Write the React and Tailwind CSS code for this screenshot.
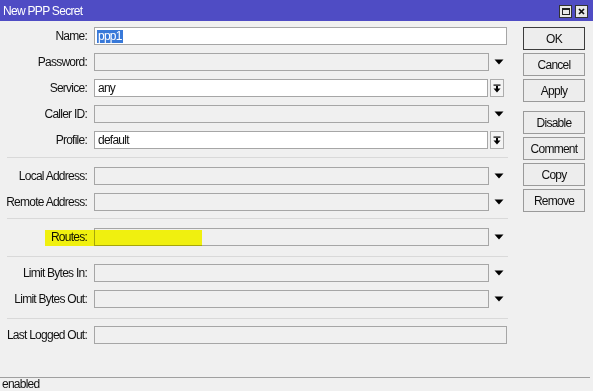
import React from 'react';

const font = { fontFamily: '"Liberation Sans", Arial, sans-serif' };

function Arrow() {
  return (
    <div className="w-[18px] h-[18px] flex items-center justify-center pl-[1px]">
      <svg width="10" height="6" viewBox="0 0 10 6">
        <polygon points="0.5,0.5 9.5,0.5 5,5.5" fill="#000" />
      </svg>
    </div>
  );
}

function ScrollBox() {
  return (
    <div className="ml-[2px] w-[14px] h-[18px] border border-[#adadad] bg-[#f4f4f4] flex items-center justify-center">
      <svg width="8" height="9" viewBox="0 0 8 9">
        <rect x="0.5" y="0.5" width="7" height="1.2" fill="#000" />
        <rect x="3" y="2" width="2" height="3" fill="#000" />
        <polygon points="0.5,4.5 7.5,4.5 4,8.5" fill="#000" />
      </svg>
    </div>
  );
}

function Row({ label, value, kind = 'arrow', white = false, selected = false, highlight = false }) {
  const inputWidth =
    kind === 'full' ? 'w-[413px]' : kind === 'scroll' ? 'w-[394px]' : 'w-[395px]';
  return (
    <div className="relative flex items-center h-[18px]">
      <div className="w-[88px] text-right pr-[1px] text-[#111]">{label}</div>
      <div
        className={`ml-[6px] h-[18px] ${inputWidth} border border-[#a6a6a6] flex items-center px-[2px] ${
          white ? 'bg-white' : 'bg-[#f0f0f0]'
        }`}
      >
        {selected ? (
          <span className="bg-[#3879d9] text-white leading-[13px] px-[1px]">{value}</span>
        ) : (
          <span className="text-[#111] px-[1px]">{value}</span>
        )}
      </div>
      {kind === 'arrow' && <Arrow />}
      {kind === 'scroll' && <ScrollBox />}
      {highlight && (
        <div className="absolute left-[45px] top-[2px] w-[157px] h-[16px] bg-[#ffff10] mix-blend-multiply" />
      )}
    </div>
  );
}

function Sep({ className }) {
  return <div className={`ml-[7px] w-[501px] h-px bg-[#d9d9d9] ${className}`} />;
}

function Btn({ children, primary = false, className = '' }) {
  return (
    <div
      className={`w-[62px] h-[23px] flex items-center justify-center bg-[#ededed] border text-[#111] ${
        primary ? 'border-[#3c3c3c]' : 'border-[#9a9a9a]'
      } ${className}`}
    >
      {children}
    </div>
  );
}

export default function App() {
  return (
    <div
      className="w-[593px] h-[391px] bg-[#f0f0f0] flex flex-col overflow-hidden text-[12px] tracking-[-0.75px]"
      style={font}
    >
      <div className="h-[21px] bg-[#4f4cc4] flex items-center justify-between pl-[3px] pr-[5px]">
        <span className="text-white text-[12px] tracking-[-0.7px]">New PPP Secret</span>
        <div className="flex items-center gap-[3px] mt-[1px]">
          <div className="w-[13px] h-[13px] bg-[#e8e8e8] border border-[#333] flex items-center justify-center">
            <div className="w-[8px] h-[7px] border border-[#222] border-t-2" />
          </div>
          <div className="w-[13px] h-[13px] bg-[#e8e8e8] border border-[#333] flex items-center justify-center">
            <svg width="7" height="7" viewBox="0 0 7 7">
              <path d="M1 1 L6 6 M6 1 L1 6" stroke="#111" strokeWidth="1.7" />
            </svg>
          </div>
        </div>
      </div>

      <div className="flex flex-1">
        <div className="w-[523px] pt-[6px] flex flex-col">
          <div className="flex flex-col gap-[8px]">
            <Row label="Name:" value="ppp1" kind="full" white selected />
            <Row label="Password:" />
            <Row label="Service:" value="any" kind="scroll" white />
            <Row label="Caller ID:" />
            <Row label="Profile:" value="default" kind="scroll" white />
          </div>
          <Sep className="mt-[8px] mb-[9px]" />
          <div className="flex flex-col gap-[8px]">
            <Row label="Local Address:" />
            <Row label="Remote Address:" />
          </div>
          <Sep className="mt-[7px] mb-[9px]" />
          <Row label="Routes:" highlight />
          <Sep className="mt-[10px] mb-[7px]" />
          <div className="flex flex-col gap-[8px]">
            <Row label="Limit Bytes In:" />
            <Row label="Limit Bytes Out:" />
          </div>
          <Sep className="mt-[10px] mb-[7px]" />
          <Row label="Last Logged Out:" kind="full" />
        </div>

        <div className="pt-[6px] flex flex-col">
          <Btn primary>OK</Btn>
          <Btn className="mt-[3px]">Cancel</Btn>
          <Btn className="mt-[3px]">Apply</Btn>
          <Btn className="mt-[9px]">Disable</Btn>
          <Btn className="mt-[3px]">Comment</Btn>
          <Btn className="mt-[3px]">Copy</Btn>
          <Btn className="mt-[3px]">Remove</Btn>
        </div>
      </div>

      <div className="w-[590px] border-t border-[#a0a0a0] h-[14px] pl-[2px] leading-[13px] text-[#111]">
        enabled
      </div>
    </div>
  );
}
